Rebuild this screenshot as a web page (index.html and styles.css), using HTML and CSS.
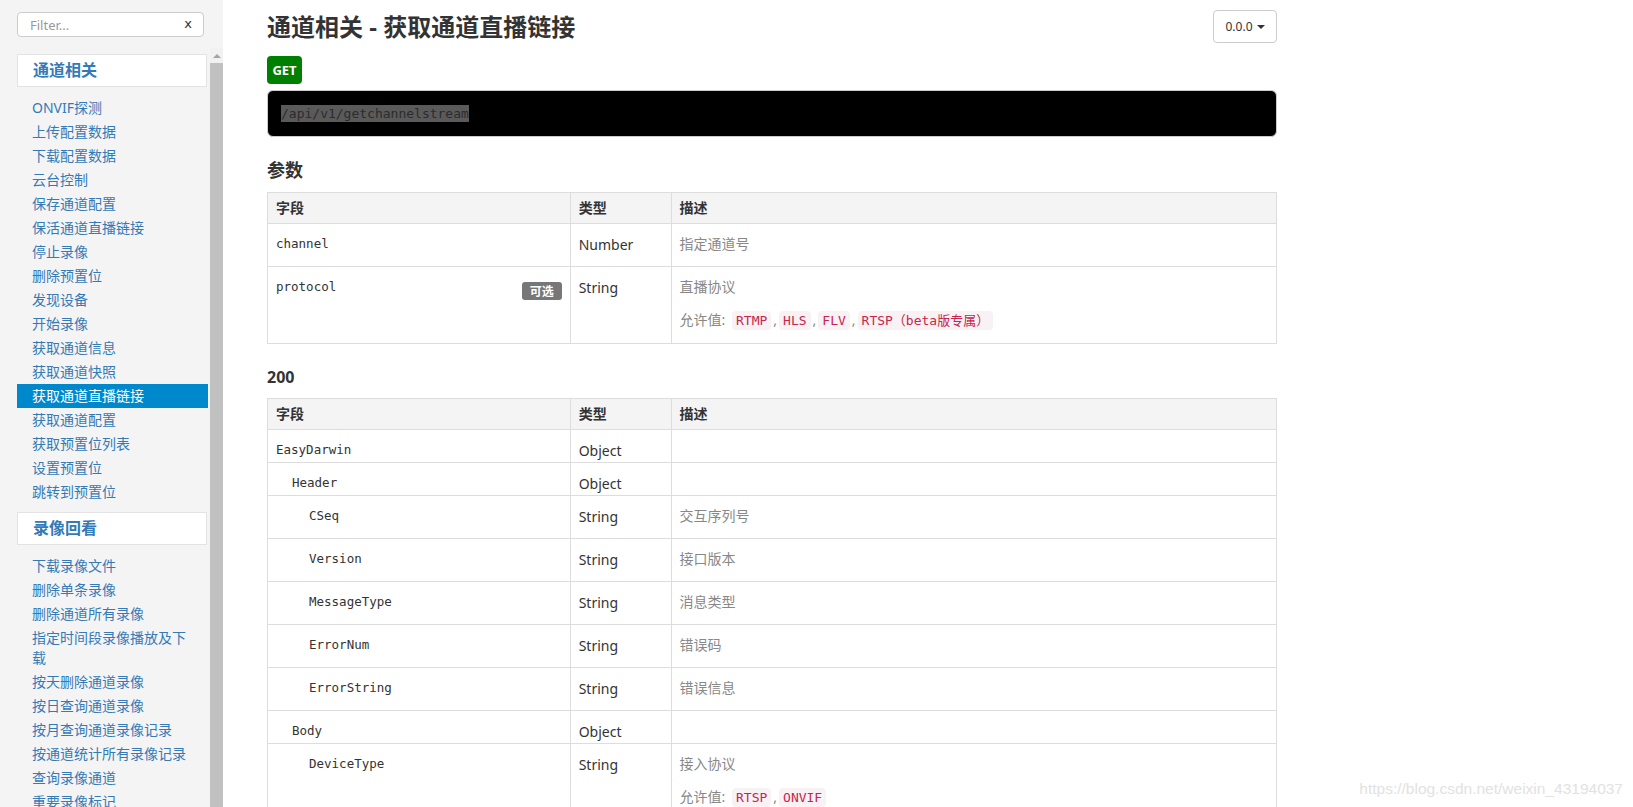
FILE: index.html
```html
<!DOCTYPE html>
<html lang="zh-CN">
<head>
<meta charset="utf-8">
<title>通道相关 - 获取通道直播链接</title>
<link rel="stylesheet" href="styles.css">
</head>
<body>
<div class="page">
  <aside class="sidebar">
    <div class="filter-wrap">
      <div class="filter">
        <input class="filter-input" type="text" placeholder="Filter...">
        <span class="filter-x">x</span>
      </div>
    </div>
    <div class="nav-area">
      <nav class="nav">
        <div class="nav-group">通道相关</div>
        <ul class="nav-list">
          <li><a>ONVIF探测</a></li>
          <li><a>上传配置数据</a></li>
          <li><a>下载配置数据</a></li>
          <li><a>云台控制</a></li>
          <li><a>保存通道配置</a></li>
          <li><a>保活通道直播链接</a></li>
          <li><a>停止录像</a></li>
          <li><a>删除预置位</a></li>
          <li><a>发现设备</a></li>
          <li><a>开始录像</a></li>
          <li><a>获取通道信息</a></li>
          <li><a>获取通道快照</a></li>
          <li><a class="active">获取通道直播链接</a></li>
          <li><a>获取通道配置</a></li>
          <li><a>获取预置位列表</a></li>
          <li><a>设置预置位</a></li>
          <li><a>跳转到预置位</a></li>
        </ul>
        <div class="nav-group">录像回看</div>
        <ul class="nav-list">
          <li><a>下载录像文件</a></li>
          <li><a>删除单条录像</a></li>
          <li><a>删除通道所有录像</a></li>
          <li><a>指定时间段录像播放及下载</a></li>
          <li><a>按天删除通道录像</a></li>
          <li><a>按日查询通道录像</a></li>
          <li><a>按月查询通道录像记录</a></li>
          <li><a>按通道统计所有录像记录</a></li>
          <li><a>查询录像通道</a></li>
          <li><a>重要录像标记</a></li>
        </ul>
      </nav>
      <div class="scrollbar">
        <div class="scroll-arrow"></div>
        <div class="scroll-thumb"></div>
      </div>
    </div>
  </aside>

  <main class="main">
    <div class="content">
      <div class="title-row">
        <h1 class="title">通道相关 - 获取通道直播链接</h1>
        <button class="version">0.0.0<span class="caret"></span></button>
      </div>
      <div class="method">GET</div>
      <pre class="endpoint"><span class="sel">/api/v1/getchannelstream</span></pre>

      <h2 class="section">参数</h2>
      <table class="fields">
        <colgroup><col class="c-field"><col class="c-type"><col class="c-desc"></colgroup>
        <thead>
          <tr><th>字段</th><th>类型</th><th>描述</th></tr>
        </thead>
        <tbody>
          <tr>
            <td class="f">channel</td>
            <td class="t">Number</td>
            <td class="d"><p>指定通道号</p></td>
          </tr>
          <tr>
            <td class="f"><div class="f-flex"><span>protocol</span><span class="opt">可选</span></div></td>
            <td class="t">String</td>
            <td class="d"><p>直播协议</p><p class="allowed">允许值: <code>RTMP</code>,<code>HLS</code>,<code>FLV</code>,<code>RTSP（beta版专属）</code></p></td>
          </tr>
        </tbody>
      </table>

      <h2 class="section status">200</h2>
      <table class="fields">
        <colgroup><col class="c-field"><col class="c-type"><col class="c-desc"></colgroup>
        <thead>
          <tr><th>字段</th><th>类型</th><th>描述</th></tr>
        </thead>
        <tbody>
          <tr><td class="f">EasyDarwin</td><td class="t">Object</td><td class="d"></td></tr>
          <tr><td class="f lv1">Header</td><td class="t">Object</td><td class="d"></td></tr>
          <tr><td class="f lv2">CSeq</td><td class="t">String</td><td class="d"><p>交互序列号</p></td></tr>
          <tr><td class="f lv2">Version</td><td class="t">String</td><td class="d"><p>接口版本</p></td></tr>
          <tr><td class="f lv2">MessageType</td><td class="t">String</td><td class="d"><p>消息类型</p></td></tr>
          <tr><td class="f lv2">ErrorNum</td><td class="t">String</td><td class="d"><p>错误码</p></td></tr>
          <tr><td class="f lv2">ErrorString</td><td class="t">String</td><td class="d"><p>错误信息</p></td></tr>
          <tr><td class="f lv1">Body</td><td class="t">Object</td><td class="d"></td></tr>
          <tr><td class="f lv2">DeviceType</td><td class="t">String</td><td class="d"><p>接入协议</p><p class="allowed">允许值: <code>RTSP</code>,<code>ONVIF</code></p></td></tr>
          <tr><td class="f lv2">URL</td><td class="t">String</td><td class="d"><p>直播链接</p></td></tr>
        </tbody>
      </table>
    </div>
    <div class="watermark">https://blog.csdn.net/weixin_43194037</div>
  </main>
</div>
</body>
</html>
```

FILE: styles.css
```css
* { box-sizing: border-box; }

html, body {
  margin: 0;
  padding: 0;
  height: 100%;
  overflow: hidden;
  background: #fff;
  font-family: "Noto Sans", "Noto Sans CJK SC", sans-serif;
  color: #333;
}

.page {
  display: flex;
  height: 100vh;
  overflow: hidden;
}

/* ---------- sidebar ---------- */
.sidebar {
  width: 223px;
  flex: none;
  background: #f4f4f4;
  display: flex;
  flex-direction: column;
}

.filter-wrap {
  padding: 12px 19px 11px 17px;
}

.filter {
  position: relative;
  height: 25px;
}

.filter-input {
  width: 100%;
  height: 25px;
  border: 1px solid #ccc;
  border-radius: 4px;
  background: #fff;
  padding: 0 24px 0 12px;
  font-family: "Noto Sans", "Noto Sans CJK SC", sans-serif;
  font-size: 13px;
  color: #555;
  outline: none;
}

.filter-input::placeholder {
  color: #999;
}

.filter-x {
  position: absolute;
  right: 12px;
  top: 0;
  line-height: 24px;
  font-size: 13px;
  color: #333;
  font-family: "DejaVu Sans", sans-serif;
}

.nav-area {
  flex: 1;
  min-height: 0;
  display: flex;
}

.nav {
  width: 210px;
  flex: none;
  padding: 6px 0 0 17px;
  overflow: hidden;
}

.nav-group {
  width: 190px;
  height: 33px;
  border: 1px solid #e3e3e3;
  background: #fff;
  padding: 0 15px;
  line-height: 31px;
  font-size: 16px;
  font-weight: bold;
  color: #337ab7;
}

.nav-list {
  list-style: none;
  margin: 9px 0 8px;
  padding: 0;
  width: 191px;
}

.nav-list a {
  display: block;
  padding: 2px 10px 2px 15px;
  line-height: 20px;
  font-size: 14px;
  color: #337ab7;
  cursor: pointer;
}

.nav-list a.active {
  background: #0088cc;
  color: #fff;
}

.scrollbar {
  width: 13px;
  flex: none;
  background: #f1f1f1;
  display: flex;
  flex-direction: column;
  align-items: center;
}

.scroll-arrow {
  margin-top: 6px;
  width: 0;
  height: 0;
  border-left: 4px solid transparent;
  border-right: 4px solid transparent;
  border-bottom: 4px solid #a3a3a3;
}

.scroll-thumb {
  margin-top: 5px;
  width: 13px;
  flex: 1;
  background: #c1c1c1;
}

/* ---------- main ---------- */
.main {
  flex: 1;
  position: relative;
  padding: 10px 0 0 44px;
  overflow: hidden;
}

.content {
  width: 1010px;
}

.title-row {
  display: flex;
  justify-content: space-between;
  align-items: center;
  height: 33px;
}

.title {
  margin: 0;
  font-size: 24px;
  font-weight: bold;
  line-height: 33px;
  color: #333;
}

.version {
  width: 64px;
  height: 33px;
  border: 1px solid #ccc;
  border-radius: 4px;
  background: #fff;
  font-family: "Noto Sans", sans-serif;
  font-size: 12px;
  color: #333;
  padding: 0;
  display: flex;
  align-items: center;
  justify-content: center;
  gap: 4px;
}

.caret {
  width: 0;
  height: 0;
  border-left: 4px solid transparent;
  border-right: 4px solid transparent;
  border-top: 4px solid #333;
  margin-top: 1px;
}

.method {
  margin-top: 13px;
  width: 35px;
  height: 28px;
  line-height: 28px;
  text-align: center;
  background: #008000;
  color: #fff;
  border-radius: 4px;
  font-size: 13px;
  font-weight: bold;
}

.endpoint {
  margin: 6px 0 0;
  padding: 14px 13px;
  background: #000;
  border: 1px solid #ccc;
  border-radius: 6px;
  font-family: "DejaVu Sans Mono", "Liberation Mono", monospace;
  font-size: 13px;
  line-height: 17px;
}

.endpoint .sel {
  background: #5a5a5a;
  color: #2c2c2c;
  padding: 1px 0;
}

.section {
  margin: 21px 0 10px;
  font-size: 18px;
  font-weight: bold;
  line-height: 24px;
  color: #333;
}

.section.status {
  margin: 21px 0 9px;
  font-size: 16px;
}

/* ---------- tables ---------- */
.fields {
  width: 100%;
  border-collapse: collapse;
  table-layout: fixed;
}

.c-field { width: 30%; }
.c-type { width: 10%; }
.c-desc { width: 60%; }

.fields th,
.fields td {
  border: 1px solid #ddd;
  text-align: left;
  vertical-align: top;
  font-size: 14px;
  line-height: 20px;
}

.fields th {
  background: #f4f4f4;
  padding: 5px 8px;
  font-weight: bold;
  color: #333;
}

.fields td {
  padding: 10px 8px 2px;
}

.fields td.f {
  font-family: "DejaVu Sans Mono", "Liberation Mono", monospace;
  font-size: 12.5px;
  color: #333;
}

.fields td.lv1 { padding-left: 24px; }
.fields td.lv2 { padding-left: 41px; }

.fields td.t {
  color: #333;
  padding-top: 11px;
  padding-bottom: 1px;
}

.fields td.d {
  color: #888;
}

.fields td.d p {
  margin: 0 0 10px;
}

.fields td.d p.allowed {
  margin-top: 13px;
}

.f-flex {
  display: flex;
  justify-content: space-between;
  align-items: flex-start;
}

.opt {
  margin-top: 5px;
  padding: 0 8px;
  line-height: 18px;
  background: #777;
  color: #fff;
  border-radius: 3px;
  font-family: "Noto Sans CJK SC", sans-serif;
  font-size: 12px;
  font-weight: bold;
}

code {
  font-family: "DejaVu Sans Mono", "Liberation Mono", "Noto Sans CJK SC", monospace;
  font-size: 13px;
  color: #c7254e;
  background: #f9f2f4;
  border-radius: 4px;
  padding: 2px 4px;
  margin: 0 2px;
}

.allowed code:first-child {
  margin-left: 3px;
}

/* ---------- watermark ---------- */
.watermark {
  position: absolute;
  right: 10px;
  bottom: 9px;
  font-family: "Liberation Sans", sans-serif;
  font-size: 15.5px;
  color: #e2e2e2;
}
```
